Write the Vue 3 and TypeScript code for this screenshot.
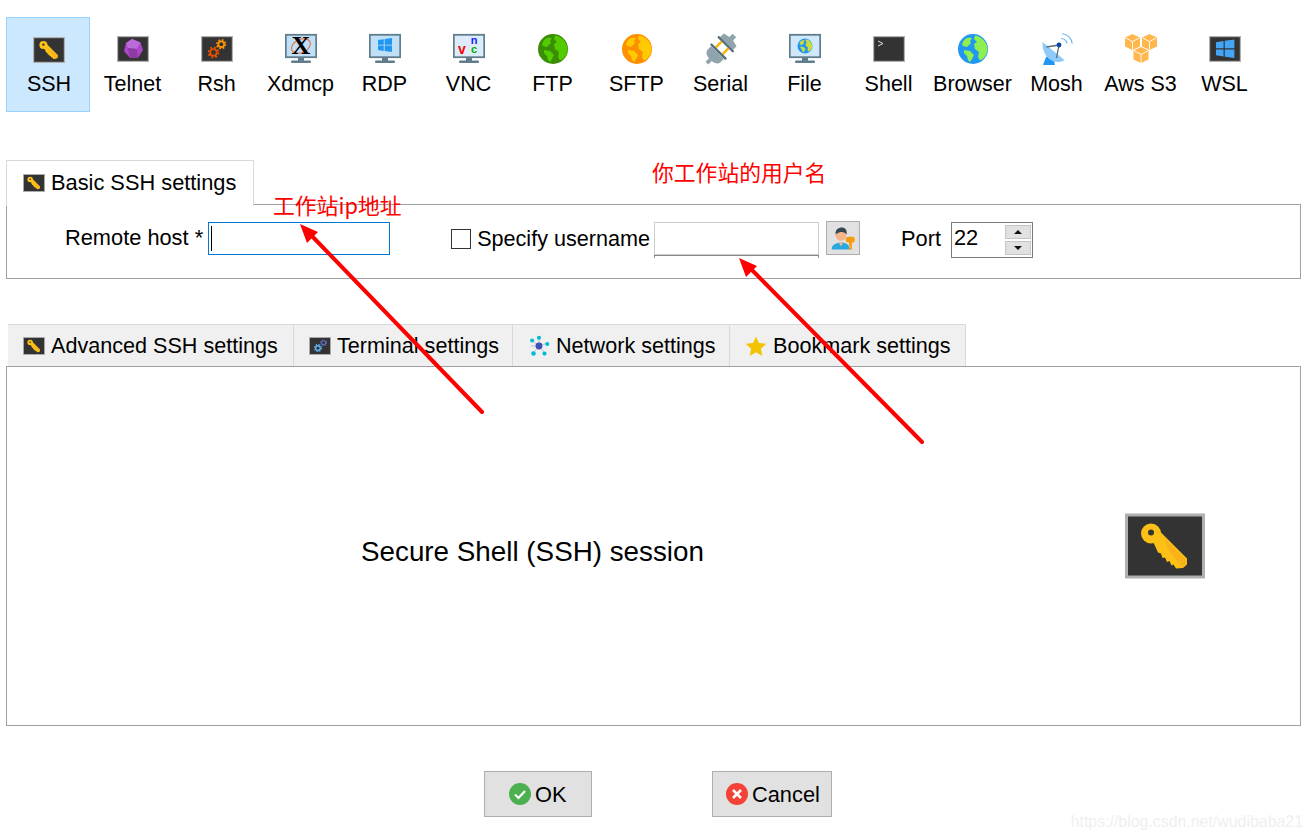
<script setup lang="ts">
interface Tool { label: string; icon: string }
const tools: Tool[] = [
  { label: 'SSH', icon: 'i-ssh' },
  { label: 'Telnet', icon: 'i-telnet' },
  { label: 'Rsh', icon: 'i-rsh' },
  { label: 'Xdmcp', icon: 'i-xdmcp' },
  { label: 'RDP', icon: 'i-rdp' },
  { label: 'VNC', icon: 'i-vnc' },
  { label: 'FTP', icon: 'i-ftp' },
  { label: 'SFTP', icon: 'i-sftp' },
  { label: 'Serial', icon: 'i-serial' },
  { label: 'File', icon: 'i-file' },
  { label: 'Shell', icon: 'i-shell' },
  { label: 'Browser', icon: 'i-browser' },
  { label: 'Mosh', icon: 'i-mosh' },
  { label: 'Aws S3', icon: 'i-aws' },
  { label: 'WSL', icon: 'i-wsl' },
]
const tabs = [
  { label: 'Advanced SSH settings', icon: 'i-ssh', width: 286 },
  { label: 'Terminal settings', icon: 'i-term', width: 219 },
  { label: 'Network settings', icon: 'i-net', width: 217 },
  { label: 'Bookmark settings', icon: 'i-star', width: 236 },
]
</script>

<template>
  <div class="page">
    <svg class="defs" width="0" height="0" aria-hidden="true">
      <defs>
        <g id="box">
          <rect x="0.6" y="3.6" width="30.8" height="24.8" fill="#333" stroke="#b0b0b0" stroke-width="1.2" />
        </g>
        <symbol id="gear" viewBox="0 0 20 20">
          <circle cx="10" cy="10" r="5.6" fill="none" stroke="currentColor" stroke-width="3.2" />
          <circle cx="10" cy="10" r="8.4" fill="none" stroke="currentColor" stroke-width="3" stroke-dasharray="3.3 3.3" />
        </symbol>
        <g id="monitor">
          <rect x="0.8" y="1.8" width="30.4" height="22.4" fill="#bfe0f7" stroke="#607d8b" stroke-width="1.8" />
          <rect x="13" y="25" width="6" height="3" fill="#607d8b" />
          <rect x="6" y="27.6" width="20" height="2.4" rx="1" fill="#607d8b" />
        </g>
        <path id="land" d="M7 7C10 4 13 4 15 5L13 8L14 10L10 14L6 13L5 11ZM18 2.5C24 3 30 9 30.5 16C30 22 27 26 23 27.5L21 24L22 19L18 16L17 11L20 9L17 6ZM7 17L13 18L17 22L15 26L13 29L11 27L10 23L7 20Z" />
        <path id="win" d="M0 2.3L6.6 1.3V7.6H0ZM7.6 1.1L16 0V7.6H7.6ZM0 8.6H6.6V14.8L0 13.8ZM7.6 8.6H16V16L7.6 14.9Z" />
        <g id="cube">
          <path d="M7.5 0L15 3.6V12.4L7.5 16L0 12.4V3.6Z" fill="#ffb74d" />
          <path d="M0.5 3.8L7.5 7.5L14.5 3.8M7.5 7.5V15.5" fill="none" stroke="#fff" stroke-width="0.9" />
        </g>

        <symbol id="i-ssh" viewBox="0 0 32 32">
          <use href="#box" />
          <g transform="translate(0 3) scale(.4)">
            <path d="M35 18L62 45V51L58 54.5L51 55L48.5 51L46.500 52L44.500 47.500L42 48.500L40 44L37.500 44.500L36 40L33 39L28 28Z" fill="#fcc016" />
            <path d="M39 24L61 46V51L57 54L43 36Z" fill="#f9b31a" />
            <circle cx="26" cy="20" r="10" fill="#fcc016" />
            <circle cx="26" cy="19" r="3" fill="#333" />
          </g>
        </symbol>
        <symbol id="i-telnet" viewBox="0 0 32 32">
          <use href="#box" />
          <path d="M15 6L23.5 9.5L26 17L21 25H13L7 18L9 10Z" fill="#ab47c8" />
          <path d="M15 6L23.5 9.5L19.5 16L11 15L9 10Z" fill="#bb6bd9" />
          <path d="M11 15L19.5 16L21 25H13Z" fill="#8e3aa5" />
        </symbol>
        <symbol id="i-rsh" viewBox="0 0 32 32">
          <use href="#box" />
          <use href="#gear" x="6.5" y="13.5" width="12" height="12" color="#e65100" />
          <use href="#gear" x="15" y="6" width="10.5" height="10.5" color="#ff9800" />
        </symbol>
        <symbol id="i-term" viewBox="0 0 32 32">
          <use href="#box" />
          <use href="#gear" x="7" y="13" width="12" height="12" color="#64b5f6" />
          <use href="#gear" x="16" y="6" width="10.5" height="10.5" color="#5c6bc0" />
        </symbol>
        <symbol id="i-xdmcp" viewBox="0 0 32 32">
          <use href="#monitor" />
          <ellipse cx="16" cy="13" rx="10" ry="6.5" transform="rotate(-25 16 13)" fill="none" stroke="#e8703a" stroke-width="1.1" />
          <text x="16" y="21" text-anchor="middle" font-family="Liberation Serif" font-weight="700" font-size="26" fill="#000">X</text>
        </symbol>
        <symbol id="i-rdp" viewBox="0 0 32 32">
          <use href="#monitor" />
          <use href="#win" transform="translate(9 5) scale(.875)" fill="#2196f3" />
        </symbol>
        <symbol id="i-vnc" viewBox="0 0 32 32">
          <rect x="0.8" y="1.8" width="30.4" height="22.4" fill="#dcecfa" stroke="#607d8b" stroke-width="1.8" />
          <rect x="13" y="25" width="6" height="3" fill="#607d8b" />
          <rect x="6" y="27.6" width="20" height="2.4" rx="1" fill="#607d8b" />
          <text x="9" y="21" text-anchor="middle" font-family="Liberation Sans" font-weight="700" font-size="14" fill="#f00">v</text>
          <text x="21" y="11" text-anchor="middle" font-family="Liberation Sans" font-weight="700" font-size="11" fill="#22f">n</text>
          <text x="21" y="20" text-anchor="middle" font-family="Liberation Sans" font-weight="700" font-size="11" fill="#0a0">c</text>
        </symbol>
        <symbol id="i-ftp" viewBox="0 0 32 32">
          <circle cx="16" cy="16" r="15" fill="#3b8d05" />
          <use href="#land" fill="#52cc00" />
        </symbol>
        <symbol id="i-sftp" viewBox="0 0 32 32">
          <circle cx="16" cy="16" r="15" fill="#ff8f00" />
          <use href="#land" fill="#ffca00" />
        </symbol>
        <symbol id="i-browser" viewBox="0 0 32 32">
          <circle cx="16" cy="16" r="15" fill="#2196f3" />
          <use href="#land" fill="#8ef04f" />
        </symbol>
        <symbol id="i-file" viewBox="0 0 32 32">
          <rect x="0.8" y="1.8" width="30.4" height="22.4" fill="#cfe8fb" stroke="#607d8b" stroke-width="1.8" />
          <rect x="13" y="25" width="6" height="3" fill="#607d8b" />
          <rect x="6" y="27.6" width="20" height="2.4" rx="1" fill="#607d8b" />
          <svg x="8" y="5" width="16" height="16" viewBox="0 0 32 32">
            <circle cx="16" cy="16" r="15" fill="#2196f3" />
            <use href="#land" fill="#cddc39" />
          </svg>
        </symbol>
        <symbol id="i-serial" viewBox="0 0 32 32">
          <g transform="rotate(45 16 16)">
            <path d="M13.5 -3H18.5V1.5L25 3V8H7V3L13.5 1.5Z" fill="#90a4ae" />
            <rect x="5" y="8" width="22" height="2.4" rx="1" fill="#546e7a" />
            <rect x="10" y="10.4" width="2.4" height="8" fill="#ffb300" />
            <rect x="19.6" y="10.4" width="2.4" height="8" fill="#ffb300" />
            <rect x="5" y="18.4" width="22" height="2.4" rx="1" fill="#546e7a" />
            <path d="M7 20.8H25V26C25 29 21 31 18 31V36H14V31C11 31 7 29 7 26Z" fill="#90a4ae" />
          </g>
        </symbol>
        <symbol id="i-shell" viewBox="0 0 32 32">
          <use href="#box" />
          <path d="M5 8L10 10.5L5 13" fill="none" stroke="#e0e0e0" stroke-width="1" />
        </symbol>
        <symbol id="i-mosh" viewBox="0 0 32 32">
          <path d="M20 5.5C23.5 5.5 26 8 26 10.5M21 0.8C26.5 1 31 5.5 31.2 10.5" fill="none" stroke="#64b5f6" stroke-width="1.1" />
          <path d="M2 32L5 24H12L14 32Z" fill="#2196f3" />
          <path d="M1.5 9L23.5 27C18 31 10 29 5.5 23.5C2.5 19 1 13.5 1.5 9Z" fill="#90caf9" />
          <path d="M5.5 14L18 12M18 12L15.5 25" fill="none" stroke="#546e7a" stroke-width="1.3" />
          <circle cx="18" cy="12" r="2.4" fill="#0d47a1" />
        </symbol>
        <symbol id="i-aws" viewBox="0 0 32 32">
          <use href="#cube" x="0" y="1" />
          <use href="#cube" x="17" y="1" />
          <use href="#cube" x="8.5" y="14" />
        </symbol>
        <symbol id="i-wsl" viewBox="0 0 32 32">
          <use href="#box" />
          <use href="#win" transform="translate(7 6.5) scale(1.15)" fill="#42a5f5" />
        </symbol>
        <symbol id="i-net" viewBox="0 0 32 32">
          <path d="M16 16L6 8M16 16L16 4M16 16L27 12M16 16L25 27M16 16L7 27M16 16L4 16" stroke="#b0bec5" stroke-width="1.2" />
          <circle cx="16" cy="16" r="5" fill="#3f51b5" />
          <circle cx="6" cy="8" r="3" fill="#00bcd4" />
          <circle cx="16" cy="4" r="3" fill="#00bcd4" />
          <circle cx="28" cy="13" r="3" fill="#00bcd4" />
          <circle cx="24" cy="27" r="3" fill="#00bcd4" />
          <circle cx="8" cy="27" r="3.3" fill="#00bcd4" />
        </symbol>
        <symbol id="i-star" viewBox="0 0 32 32">
          <path d="M16 2L20.3 11.5L31 12.8L23 20L25.3 30.5L16 25L6.7 30.5L9 20L1 12.8L11.7 11.5Z" fill="#f4c300" />
        </symbol>
        <symbol id="i-user" viewBox="0 0 32 32">
          <path d="M2 30C2 24 8 21.5 14 21.5C20 21.5 24 24 24 30Z" fill="#29a9e0" />
          <circle cx="13.5" cy="13" r="6.5" fill="#f6b48a" />
          <path d="M7 12C6 6 10 3 15 3C20 3 21 8 20.5 12C19 9 15 8 12 9C10 10 8 10 7 12Z" fill="#37474f" />
          <path d="M10.5 21.5L13.5 26L16.5 21.5Z" fill="#f6b48a" />
          <rect x="19.5" y="14.5" width="11" height="7" rx="2.5" fill="#f59d0e" />
          <path d="M23.5 20H27V29.5L25 31L23.5 29.5V27.5H25V26H23.5Z" fill="#f59d0e" />
        </symbol>
      </defs>
    </svg>

    <nav class="toolbar">
      <div v-for="(t, i) in tools" :key="t.label" class="tool" :class="{ active: i === 0 }">
        <svg class="tool-icon" width="32" height="32"><use :href="'#' + t.icon" /></svg>
        <span class="tool-label">{{ t.label }}</span>
      </div>
    </nav>

    <div class="basic-tab">
      <svg width="22" height="22"><use href="#i-ssh" /></svg>
      <span>Basic SSH settings</span>
    </div>
    <section class="basic-panel">
      <span class="lbl host-lbl">Remote host *</span>
      <div class="host-input"><i class="caret"></i></div>
      <div class="check"></div>
      <span class="lbl user-lbl">Specify username</span>
      <div class="user-field">
        <div class="user-box"></div>
        <div class="user-rule"></div>
      </div>
      <div class="user-btn"><svg width="26" height="26"><use href="#i-user" /></svg></div>
      <span class="lbl port-lbl">Port</span>
      <div class="port">
        <span class="port-val">22</span>
        <div class="spin">
          <div class="spin-btn"><i class="up"></i></div>
          <div class="spin-btn"><i class="down"></i></div>
        </div>
      </div>
    </section>

    <div class="tabs">
      <div v-for="t in tabs" :key="t.label" class="tab" :style="{ width: t.width + 'px' }">
        <svg width="22" height="22"><use :href="'#' + t.icon" /></svg>
        <span>{{ t.label }}</span>
      </div>
    </div>
    <section class="main-panel">
      <span class="session">Secure Shell (SSH) session</span>
      <svg class="big-key" width="80" height="80"><use href="#i-ssh" /></svg>
    </section>

    <div class="actions">
      <button class="btn ok">
        <svg width="22" height="22" viewBox="0 0 22 22">
          <circle cx="11" cy="11" r="11" fill="#4caf50" />
          <path d="M6 11.5L9.5 15L16 8" fill="none" stroke="#fff" stroke-width="2.2" />
        </svg>
        <span>OK</span>
      </button>
      <button class="btn cancel">
        <svg width="22" height="22" viewBox="0 0 22 22">
          <circle cx="11" cy="11" r="11" fill="#f44336" />
          <path d="M7 7L15 15M15 7L7 15" fill="none" stroke="#fff" stroke-width="2.6" />
        </svg>
        <span>Cancel</span>
      </button>
    </div>

    <svg class="arrows" width="1311" height="840" viewBox="0 0 1311 840">
      <path d="M482 412L310 234" stroke="#f00" stroke-width="4" stroke-linecap="round" />
      <path d="M300 224L318 232L307 243Z" fill="#f00" />
      <path d="M922 442L749 267" stroke="#f00" stroke-width="4" stroke-linecap="round" />
      <path d="M739 258L757 266L746 277Z" fill="#f00" />
    </svg>
    <span class="note note-ip">工作站ip地址</span>
    <span class="note note-user">你工作站的用户名</span>
    <span class="watermark">https://blog.csdn.net/wudibaba21</span>
  </div>
</template>

<style scoped>
.page {
  position: relative;
  width: 1311px;
  height: 840px;
  overflow: hidden;
  background: #fff;
  color: #000;
  font-family: "Liberation Sans", Arial, sans-serif;
  font-size: 21.8px;
}
.defs { position: absolute; }
.toolbar {
  display: flex;
  height: 95px;
  padding: 17px 0 0 6px;
}
.tool {
  box-sizing: border-box;
  width: 84px;
  height: 95px;
  padding: 15px 0 0 2px;
  border: 1px solid transparent;
  display: flex;
  flex-direction: column;
  align-items: center;
}
.tool.active {
  background: #cce8ff;
  border-color: #99d1ff;
  padding-top: 16px;
}
.tool-icon { flex: none; }
.tool-label {
  margin: 6px 1px 0 0;
  font-size: 21.5px;
  line-height: 26px;
  white-space: nowrap;
}
.active .tool-label { margin: 5px 0 0 0; }
.basic-tab {
  position: relative;
  box-sizing: border-box;
  width: 248px;
  height: 46px;
  margin: 48px 0 -2px 6px;
  padding: 0 0 2px 16px;
  display: flex;
  align-items: center;
  gap: 6px;
  background: #fff;
  border: 1px solid #d9d9d9;
  border-bottom: none;
  z-index: 1;
}
.basic-panel {
  box-sizing: border-box;
  width: 1295px;
  height: 75px;
  margin-left: 6px;
  padding: 17px 0 0 58px;
  border: 1px solid #a0a0a0;
  display: flex;
  align-items: flex-start;
}
.lbl { line-height: 32px; white-space: nowrap; }
.host-input {
  box-sizing: border-box;
  width: 182px;
  height: 33px;
  margin-left: 5px;
  padding: 3px 0 0 2px;
  border: 1px solid #0078d7;
}
.caret { display: block; width: 1px; height: 25px; background: #000; }
.check {
  box-sizing: border-box;
  width: 20px;
  height: 20px;
  margin: 7px 0 0 61px;
  border: 1px solid #333;
}
.user-lbl { margin: 1px 0 0 6px; font-size: 21.6px; }
.user-field { width: 165px; margin-left: 4px; }
.user-box { box-sizing: border-box; height: 33px; border: 1px solid #ccc; }
.user-rule { box-sizing: border-box; height: 3px; border: 1px solid #888; border-bottom: none; }
.user-btn {
  box-sizing: border-box;
  width: 34px;
  height: 34px;
  margin: -1px 0 0 7px;
  background: #e1e1e1;
  border: 1px solid #adadad;
  display: flex;
  align-items: center;
  justify-content: center;
}
.port-lbl { margin: 1px 0 0 41px; }
.port {
  box-sizing: border-box;
  width: 82px;
  height: 36px;
  margin-left: 10px;
  padding: 2px 1px 0 2px;
  border: 1px solid #7a7a7a;
  display: flex;
  justify-content: space-between;
}
.port-val { line-height: 26px; }
.spin { width: 26px; display: flex; flex-direction: column; gap: 2px; }
.spin-btn {
  box-sizing: border-box;
  height: 14px;
  background: #e1e1e1;
  border: 1px solid #c4c4c4;
  display: flex;
  align-items: center;
  justify-content: center;
}
.up, .down { width: 0; height: 0; border-left: 4px solid transparent; border-right: 4px solid transparent; }
.up { border-bottom: 4px solid #111; }
.down { border-top: 4px solid #111; }
.tabs {
  display: flex;
  height: 42px;
  margin: 45px 0 0 8px;
  font-size: 21.6px;
}
.tab {
  box-sizing: border-box;
  height: 42px;
  padding-left: 15px;
  display: flex;
  align-items: center;
  gap: 6px;
  background: #f0f0f0;
  border-top: 1px solid #d9d9d9;
  border-right: 1px solid #d9d9d9;
  white-space: nowrap;
}
.tab svg { flex: none; }
.main-panel {
  box-sizing: border-box;
  width: 1295px;
  height: 360px;
  margin-left: 6px;
  padding: 0 95px 0 354px;
  border: 1px solid #a0a0a0;
  display: flex;
  align-items: center;
  justify-content: space-between;
}
.session { font-size: 27.8px; margin-top: 12px; white-space: nowrap; }
.big-key { display: block; margin-top: -1px; }
.actions {
  display: flex;
  gap: 120px;
  margin-top: 45px;
  padding-left: 484px;
}
.btn {
  box-sizing: border-box;
  height: 46px;
  padding: 0;
  display: flex;
  align-items: center;
  gap: 4px;
  background: #e1e1e1;
  border: 1px solid #adadad;
  font: inherit;
  color: #000;
}
.btn span { margin-top: 1px; }
.ok { width: 108px; padding-left: 24px; }
.cancel { width: 120px; padding-left: 13px; }
.arrows { position: absolute; left: 0; top: 0; pointer-events: none; }
.note {
  position: absolute;
  color: #f00;
  font-family: "Noto Sans CJK SC", "Liberation Sans", sans-serif;
  font-size: 21.8px;
  line-height: 28px;
  white-space: nowrap;
}
.note-ip { left: 273px; top: 191px; }
.note-user { left: 652px; top: 158px; }
.watermark {
  position: absolute;
  right: 8px;
  top: 812px;
  color: #efefef;
  font-size: 15.9px;
  line-height: 20px;
  white-space: nowrap;
}
</style>
